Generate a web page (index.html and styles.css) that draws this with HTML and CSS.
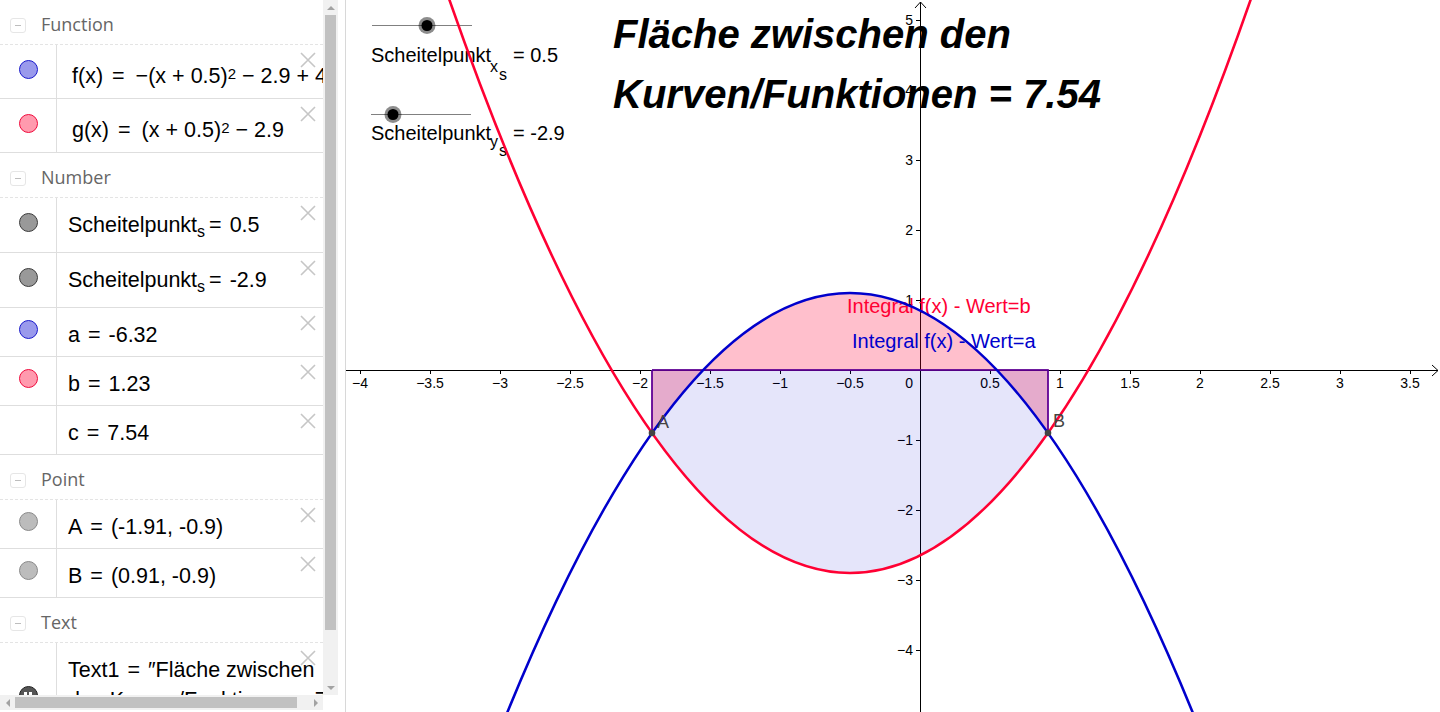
FILE: index.html
```html
<!DOCTYPE html>
<html lang="de">
<head>
<meta charset="utf-8">
<title>Fläche zwischen den Kurven</title>
<link rel="stylesheet" href="styles.css">
</head>
<body>
<div class="app">
  <aside class="algebra">
    <div class="av-view">
      <div class="group-head"><span class="toggle"></span><span class="group-label">Function</span></div>
      <div class="item h54">
        <div class="marble-cell tall"><span class="marble m-blue"></span></div>
        <div class="expr fx">f(x)<span class="rel">=</span>−(x<span class="bin">+</span>0.5)<sup>2</sup><span class="bin">−</span>2.9<span class="bin">+</span>4</div>
        <svg class="close" viewBox="0 0 16 16"><path d="M1 1L15 15M15 1L1 15"/></svg>
      </div>
      <div class="item h54">
        <div class="marble-cell tall"><span class="marble m-red"></span></div>
        <div class="expr fx">g(x)<span class="rel">=</span>(x<span class="bin">+</span>0.5)<sup>2</sup><span class="bin">−</span>2.9</div>
        <svg class="close" viewBox="0 0 16 16"><path d="M1 1L15 15M15 1L1 15"/></svg>
      </div>

      <div class="group-head"><span class="toggle"></span><span class="group-label">Number</span></div>
      <div class="item h55">
        <div class="marble-cell mid"><span class="marble m-gray"></span></div>
        <div class="expr">Scheitelpunkt<sub>s</sub><span class="rel tight">=</span>0.5</div>
        <svg class="close" viewBox="0 0 16 16"><path d="M1 1L15 15M15 1L1 15"/></svg>
      </div>
      <div class="item h55">
        <div class="marble-cell mid"><span class="marble m-gray"></span></div>
        <div class="expr">Scheitelpunkt<sub>s</sub><span class="rel tight">=</span>-2.9</div>
        <svg class="close" viewBox="0 0 16 16"><path d="M1 1L15 15M15 1L1 15"/></svg>
      </div>
      <div class="item">
        <div class="marble-cell"><span class="marble m-blue"></span></div>
        <div class="expr">a<span class="rel">=</span>-6.32</div>
        <svg class="close" viewBox="0 0 16 16"><path d="M1 1L15 15M15 1L1 15"/></svg>
      </div>
      <div class="item">
        <div class="marble-cell"><span class="marble m-red"></span></div>
        <div class="expr">b<span class="rel">=</span>1.23</div>
        <svg class="close" viewBox="0 0 16 16"><path d="M1 1L15 15M15 1L1 15"/></svg>
      </div>
      <div class="item">
        <div class="marble-cell"></div>
        <div class="expr">c<span class="rel">=</span>7.54</div>
        <svg class="close" viewBox="0 0 16 16"><path d="M1 1L15 15M15 1L1 15"/></svg>
      </div>

      <div class="group-head"><span class="toggle"></span><span class="group-label">Point</span></div>
      <div class="item">
        <div class="marble-cell"><span class="marble m-point"></span></div>
        <div class="expr">A<span class="rel">=</span>(-1.91, -0.9)</div>
        <svg class="close" viewBox="0 0 16 16"><path d="M1 1L15 15M15 1L1 15"/></svg>
      </div>
      <div class="item">
        <div class="marble-cell"><span class="marble m-point"></span></div>
        <div class="expr">B<span class="rel">=</span>(0.91, -0.9)</div>
        <svg class="close" viewBox="0 0 16 16"><path d="M1 1L15 15M15 1L1 15"/></svg>
      </div>

      <div class="group-head"><span class="toggle"></span><span class="group-label">Text</span></div>
      <div class="item text-item">
        <div class="marble-cell centered"><span class="marble m-text"></span></div>
        <div class="expr multi">Text1<span class="rel">=</span>″Fläche zwischen<br>den Kurven/Funktionen = 7.54″</div>
        <svg class="close" viewBox="0 0 16 16"><path d="M1 1L15 15M15 1L1 15"/></svg>
      </div>
    </div>
    <div class="vscroll"><span class="arr arr-up"></span><span class="vthumb"></span><span class="arr arr-down"></span></div>
    <div class="hscroll"><span class="arr arr-left"></span><span class="hthumb"></span><span class="arr arr-right"></span></div>
    <div class="corner"></div>
  </aside>
  <div class="splitter"></div>
  <main class="graphics">
    <svg class="plot" width="1094" height="712" viewBox="346 0 1094 712">
      <!-- axes -->
      <g class="axis">
        <line x1="346" y1="370.5" x2="1438" y2="370.5"/>
        <path d="M1432,365 L1438,370.5 L1432,376" fill="none"/>
        <line x1="920.5" y1="2" x2="920.5" y2="712"/>
        <path d="M915,8 L920.5,2 L926,8" fill="none"/>
        <path d="M360.5,370 V374 M430.5,370 V374 M500.5,370 V374 M570.5,370 V374 M640.5,370 V374 M710.5,370 V374 M780.5,370 V374 M850.5,370 V374 M990.5,370 V374 M1060.5,370 V374 M1130.5,370 V374 M1200.5,370 V374 M1270.5,370 V374 M1340.5,370 V374 M1410.5,370 V374"/>
        <path d="M916,20.5 H920 M916,90.5 H920 M916,160.5 H920 M916,230.5 H920 M916,300.5 H920 M916,440.5 H920 M916,510.5 H920 M916,580.5 H920 M916,650.5 H920"/>
      </g>
      <g class="tick-x">
        <text x="360" y="388">−4</text>
        <text x="430" y="388">−3.5</text>
        <text x="500" y="388">−3</text>
        <text x="570" y="388">−2.5</text>
        <text x="640" y="388">−2</text>
        <text x="710" y="388">−1.5</text>
        <text x="780" y="388">−1</text>
        <text x="850" y="388">−0.5</text>
        <text x="990" y="388">0.5</text>
        <text x="1060" y="388">1</text>
        <text x="1130" y="388">1.5</text>
        <text x="1200" y="388">2</text>
        <text x="1270" y="388">2.5</text>
        <text x="1340" y="388">3</text>
        <text x="1410" y="388">3.5</text>
      </g>
      <g class="tick-y">
        <text x="913" y="388">0</text>
        <text x="913" y="25">5</text>
        <text x="913" y="95">4</text>
        <text x="913" y="165">3</text>
        <text x="913" y="235">2</text>
        <text x="913" y="305">1</text>
        <text x="913" y="445">−1</text>
        <text x="913" y="515">−2</text>
        <text x="913" y="585">−3</text>
        <text x="913" y="655">−4</text>
      </g>

      <!-- integral regions -->
      <path class="fill-b" d="M652,370 L652,433 Q850,153 1048,433 L1048,370 Z"/>
      <path class="fill-a" d="M652,370 L652,433 Q850,713 1048,433 L1048,370 Z"/>
      <path class="edge-b" d="M652,370 L652,433 M1048,433 L1048,370 L652,370"/>
      <path class="edge-a" d="M652,370 L652,433 M1048,433 L1048,370 L652,370"/>

      <!-- texts -->
      <text class="t-title" x="613" y="48">Fläche zwischen den</text>
      <text class="t-title" x="613" y="108">Kurven/Funktionen = 7.54</text>
      <text class="t-int red" x="847" y="313">Integral f(x) - Wert=b</text>
      <text class="t-int blue" x="852" y="348">Integral f(x) - Wert=a</text>

      <!-- sliders -->
      <g class="slider">
        <line x1="372" y1="25.5" x2="472" y2="25.5"/>
        <circle class="halo" cx="427" cy="25.5" r="8.5"/>
        <circle class="knob" cx="427" cy="25.5" r="5.5"/>
        <line x1="371" y1="114.5" x2="471" y2="114.5"/>
        <circle class="halo" cx="393" cy="114.5" r="8.5"/>
        <circle class="knob" cx="393" cy="114.5" r="5.5"/>
      </g>
      <text class="t-slider" x="371" y="62">Scheitelpunkt</text>
      <text class="t-sub" x="490" y="72">x</text>
      <text class="t-sub" x="499" y="80">s</text>
      <text class="t-slider" x="513" y="62">= 0.5</text>
      <text class="t-slider" x="371" y="140">Scheitelpunkt</text>
      <text class="t-sub" x="490" y="147">y</text>
      <text class="t-sub" x="499" y="156">s</text>
      <text class="t-slider" x="513" y="140">= -2.9</text>

      <!-- curves -->
      <path class="curve-g" d="M430,-57 Q850,1203 1270,-57"/>
      <path class="curve-f" d="M430,923 Q850,-337 1270,923"/>

      <!-- points -->
      <circle class="pt" cx="652" cy="433" r="3.3"/>
      <circle class="pt" cx="1048" cy="433" r="3.3"/>
      <text class="t-pt" x="657" y="428">A</text>
      <text class="t-pt" x="1053" y="427">B</text>
    </svg>
  </main>
</div>
</body>
</html>
```

FILE: styles.css
```css
* { box-sizing: border-box; }
html, body { margin: 0; padding: 0; }
body {
  width: 1440px;
  height: 712px;
  overflow: hidden;
  background: #fff;
  font-family: "Liberation Sans", Arial, sans-serif;
}
.app { display: flex; width: 1440px; height: 712px; }

/* ---------- algebra view ---------- */
.algebra {
  width: 338px;
  flex: none;
  display: grid;
  grid-template-columns: 323px 15px;
  grid-template-rows: 695px 15px;
}
.av-view { overflow: hidden; position: relative; }

.group-head {
  height: 45px;
  display: flex;
  align-items: flex-start;
  padding: 12px 0 0 10px;
  border-bottom: 1px dashed #e4e4e4;
}
.toggle {
  width: 16px;
  height: 15px;
  margin-top: 6px;
  border: 1px solid #e6e6e6;
  border-radius: 3px;
  display: flex;
  align-items: center;
  justify-content: center;
}
.toggle::before { content: ""; width: 6px; height: 1px; background: #bdbdbd; }
.group-label {
  margin-left: 15px;
  font-family: "Open Sans", "Noto Sans", sans-serif;
  font-size: 18px;
  line-height: 24px;
  color: #666;
}

.item {
  position: relative;
  display: flex;
  height: 49px;
  border-bottom: 1px solid #dedede;
}
.item.h54 { height: 54px; }
.item.h55 { height: 55px; }
.item.text-item { height: 104px; border-bottom: 0; }

.marble-cell {
  width: 57px;
  flex: none;
  border-right: 1px solid #dedede;
  display: flex;
  justify-content: center;
  align-items: flex-start;
  padding-top: 12px;
}
.marble-cell.tall { padding-top: 15px; }
.marble-cell.mid { padding-top: 15px; }
.marble-cell.centered { padding-top: 43px; }

.marble {
  position: relative;
  width: 19px;
  height: 19px;
  border-radius: 50%;
  border: 1px solid;
}
.m-blue { background: #9a9aec; border-color: #1a1acc; }
.m-red { background: #ff9aae; border-color: #f00a3c; }
.m-gray { background: #999; border-color: #3c3c3c; }
.m-point { background: #bcbcbc; border-color: #8a8a8a; }
.m-text { background: #555; border-color: #222; }
.m-text::before {
  content: "";
  position: absolute;
  left: 4px;
  top: 5px;
  width: 3px;
  height: 4px;
  background: #fff;
  box-shadow: 5px 0 0 #fff;
}

.expr {
  padding: 15px 0 0 11px;
  font-size: 21.5px;
  line-height: 24px;
  white-space: nowrap;
  color: #000;
}
.expr.fx { padding: 19px 0 0 15px; }
.expr.multi { line-height: 30px; padding-top: 12px; }
.rel { margin: 0 8px; }
.rel.tight { margin: 0 8px 0 4px; }
.fx .rel { margin: 0 11px 0 9px; }
.bin { margin: 0 6px; }
.expr sup { font-size: 15px; line-height: 0; vertical-align: 4px; }
.expr sub { font-size: 16px; line-height: 0; vertical-align: -5px; }

.close {
  position: absolute;
  left: 300px;
  top: 7px;
  width: 16px;
  height: 16px;
}
.close path { stroke: #c6c6c6; stroke-width: 1.6; fill: none; }

/* scrollbars */
.vscroll {
  grid-column: 2;
  grid-row: 1;
  background: #f1f1f1;
  display: flex;
  flex-direction: column;
  align-items: center;
}
.vthumb { width: 11px; height: 615px; background: #c1c1c1; flex: none; }
.hscroll {
  grid-column: 1;
  grid-row: 2;
  background: #f1f1f1;
  display: flex;
  align-items: center;
}
.hthumb { width: 282px; height: 11px; background: #c1c1c1; flex: none; }
.corner { grid-column: 2; grid-row: 2; background: #fff; }
.arr {
  width: 15px;
  height: 15px;
  flex: none;
  display: flex;
  align-items: center;
  justify-content: center;
}
.arr::before { content: ""; border: 4px solid transparent; }
.arr-up::before { border-bottom-color: #a3a3a3; border-top-width: 0; }
.arr-down { margin-top: auto; }
.arr-down::before { border-top-color: #a3a3a3; border-bottom-width: 0; }
.arr-left::before { border-right-color: #a3a3a3; border-left-width: 0; }
.arr-right { margin-left: auto; }
.arr-right::before { border-left-color: #a3a3a3; border-right-width: 0; }

.splitter { width: 8px; flex: none; border-right: 1px solid #d8d8d8; }

/* ---------- graphics view ---------- */
.graphics { flex: 1; min-width: 0; overflow: hidden; }
.plot { display: block; }

.axis line, .axis path { stroke: #000; stroke-width: 1; fill: none; }
.tick-x text, .tick-y text {
  font-family: "Liberation Sans", Arial, sans-serif;
  font-size: 14px;
  fill: #000;
}
.tick-x text { text-anchor: middle; }
.tick-y text { text-anchor: end; }

.fill-b { fill: #ff0033; fill-opacity: 0.25; }
.fill-a { fill: #0000cc; fill-opacity: 0.1; }
.edge-b { fill: none; stroke: #ff0033; stroke-width: 1.5; }
.edge-a { fill: none; stroke: #0000cc; stroke-width: 1.5; stroke-opacity: 0.75; }

.t-title {
  font-family: "Liberation Sans", Arial, sans-serif;
  font-style: italic;
  font-weight: 700;
  font-size: 40px;
  fill: #000;
}
.t-int { font-family: "Liberation Sans", Arial, sans-serif; font-size: 20px; }
.t-int.red { fill: #ff0033; }
.t-int.blue { fill: #0000cc; }

.slider line { stroke: #808080; stroke-width: 1; }
.slider .halo { fill: #000; fill-opacity: 0.45; }
.slider .knob { fill: #000; }
.t-slider { font-family: "Liberation Sans", Arial, sans-serif; font-size: 20px; fill: #000; }
.t-sub { font-family: "Liberation Sans", Arial, sans-serif; font-size: 16px; fill: #000; }

.curve-f { fill: none; stroke: #0000cc; stroke-width: 2.6; }
.curve-g { fill: none; stroke: #ff0033; stroke-width: 2.6; }

.pt { fill: #444; }
.t-pt { font-family: "Liberation Sans", Arial, sans-serif; font-size: 18px; fill: #444; }
```
